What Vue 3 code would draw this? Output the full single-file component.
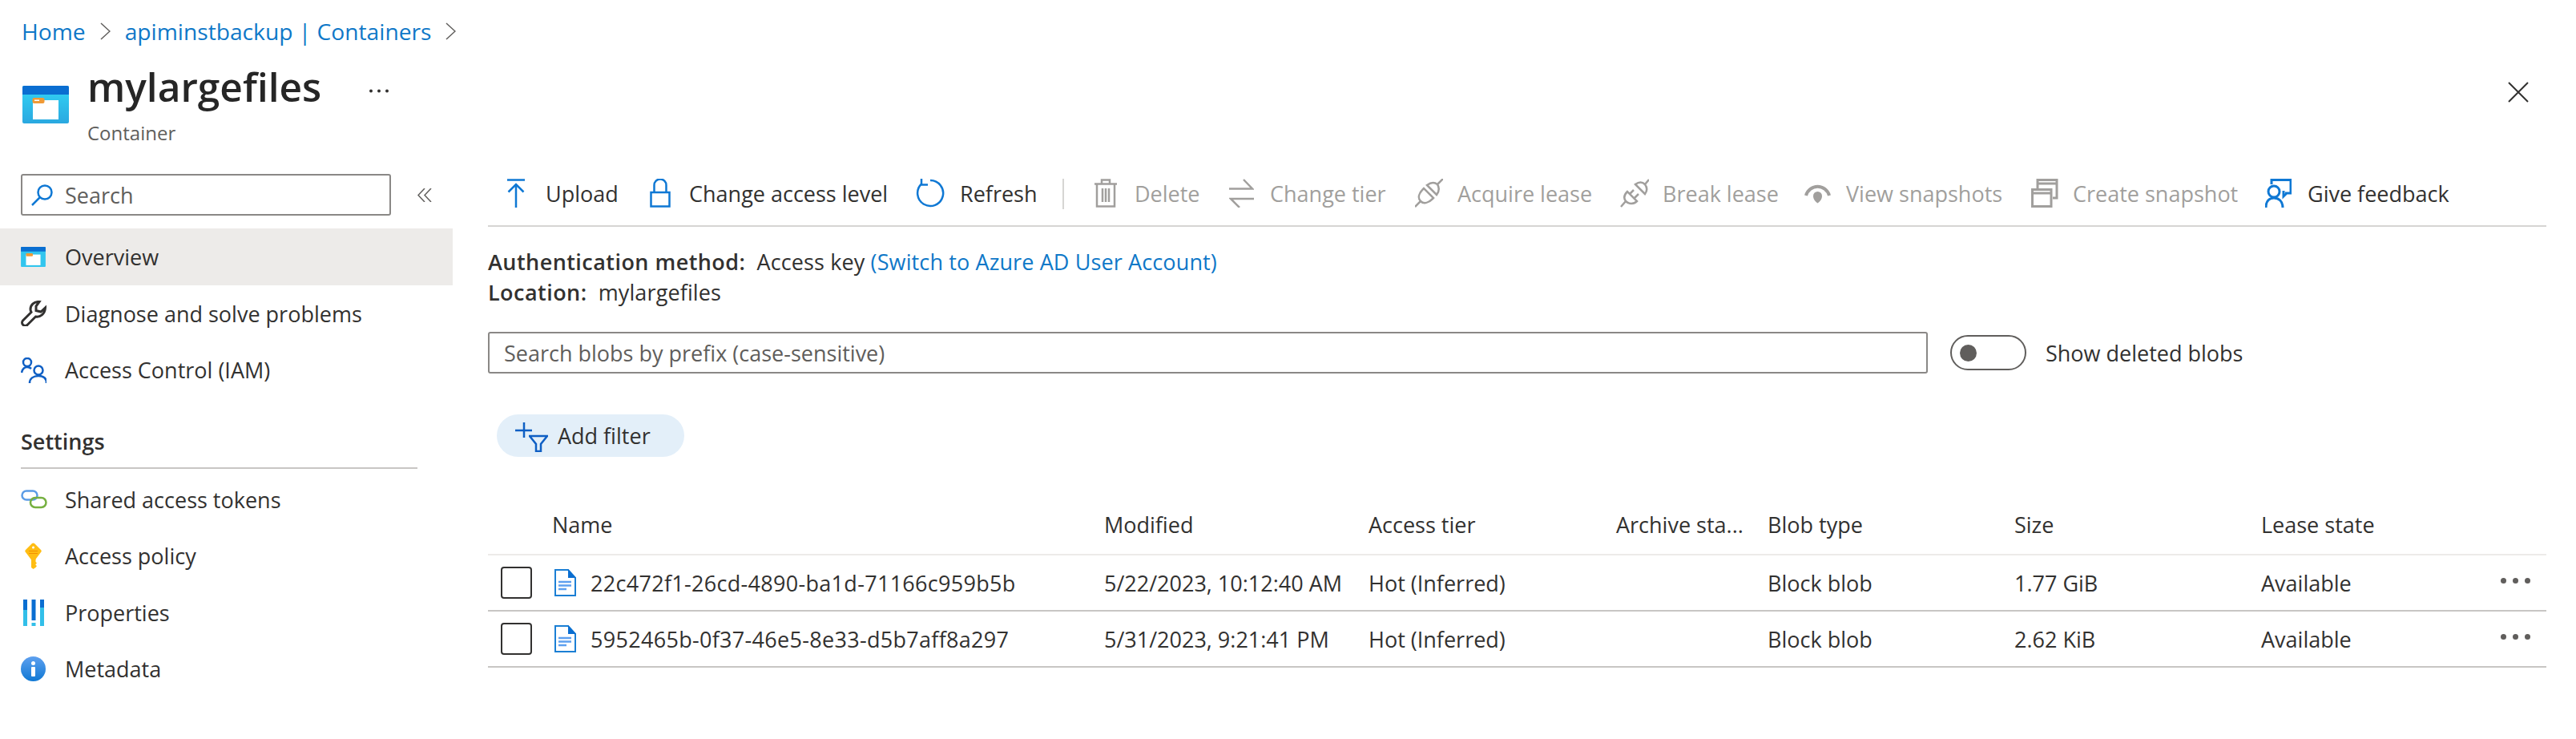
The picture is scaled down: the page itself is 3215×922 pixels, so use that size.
<script setup>
const tools = [
  { label: 'Upload', box: 48, w: 22, d: 'M0 1.5H22M11 36V7M1.5 16.5L11 7l9.5 9.5' },
  { label: 'Change access level', box: 49, w: 26, d: 'M1.5 17h23v17.5h-23zM5.5 17V8a7.5 7.5 0 0 1 15 0v9' },
  { label: 'Refresh', box: 55, w: 36, d: 'M18 2A16 16 0 1 1 7 6.5M7 0V7.5h8' },
  { sep: true },
  { label: 'Delete', box: 50, w: 28, off: true, d: 'M0 6.5H28M9 6V1.5h10V6M3 7V34.5h22V7M10 12V29M14 12V29M18 12V29' },
  { label: 'Change tier', box: 51, w: 31, off: true, d: 'M0 12.5H29L18 1M31 25H2L13 36' },
  { label: 'Acquire lease', box: 53, w: 35, off: true, d: 'M0 35L7 28M7 28C3 24 5 18 10 13L11 12L23 24L22 25C17 30 11 32 7 28ZM15 8L27 20C30 16 31 12 28 7C24 4 19 5 15 8ZM28 7L35 0' },
  { label: 'Break lease', box: 53, w: 36, off: true, d: 'M1 35L7 28C4 24 5 20 9 16L21 28C17 32 11 32 7 28M12 19L17 14M18 24L23 19M19 7L31 19C34 15 34 11 31 7C27 3 23 4 19 7ZM31 7L36 1' },
  { label: 'View snapshots', box: 52, w: 33, off: true, d: 'M2 21A15 15 0 0 1 31 21', fill: 'M16.5 16a5.5 5.5 0 0 1 5.5 5.5c0 4-3 7.5-5.5 9-2.500-1.500-5.500-5-5.500-9a5.500 5.500 0 0 1 5.500-5.500z', heavy: true },
  { label: 'Create snapshot', box: 52, w: 34, off: true, thick: true, d: 'M8 13V1.500H32V24H27M8 6H32M1.500 13.500H25V34.500H1.500ZM1.500 18H25' },
  { label: 'Give feedback', box: 53, w: 33, thick: true, d: 'M8 7V1.500H32V18H25M27 18L23 22V15M18 16a7 7 0 1 1-14 0a7 7 0 1 1 14 0M1 36C1 28 5 24 11 24S22 28 22 36' }
]

const columns = ['Name', 'Modified', 'Access tier', 'Archive sta...', 'Blob type', 'Size', 'Lease state']

const blobs = [
  { name: '22c472f1-26cd-4890-ba1d-71166c959b5b', modified: '5/22/2023, 10:12:40 AM', tier: 'Hot (Inferred)', type: 'Block blob', size: '1.77 GiB', lease: 'Available' },
  { name: '5952465b-0f37-46e5-8e33-d5b7aff8a297', modified: '5/31/2023, 9:21:41 PM', tier: 'Hot (Inferred)', type: 'Block blob', size: '2.62 KiB', lease: 'Available' }
]
</script>

<template>
  <div class="page">
    <nav class="crumbs">
      <a>Home</a>
      <svg class="chev" width="13" height="22" viewBox="0 0 13 22"><path d="M1 1l11 10L1 21" /></svg>
      <a>apiminstbackup | Containers</a>
      <svg class="chev" width="13" height="22" viewBox="0 0 13 22"><path d="M1 1l11 10L1 21" /></svg>
    </nav>

    <header class="head">
      <svg class="head-icon" width="58" height="47" viewBox="0 0 58 47">
        <defs>
          <linearGradient id="box" x1="0" y1="0" x2="0" y2="1">
            <stop offset="0" stop-color="#32d4f5" />
            <stop offset="1" stop-color="#2aa8e0" />
          </linearGradient>
        </defs>
        <rect width="58" height="47" rx="2" fill="url(#box)" />
        <path d="M0 11V2a2 2 0 0 1 2-2h54a2 2 0 0 1 2 2v9z" fill="#0a6ed1" />
        <rect x="13" y="18" width="32" height="24" fill="#fff" />
        <rect x="12.500" y="15" width="15" height="7" rx="2" fill="#f09a36" />
        <rect x="15" y="17.500" width="6" height="1.500" fill="#fff" />
      </svg>
      <div class="head-text">
        <h1>mylargefiles</h1>
        <div class="sub">Container</div>
      </div>
      <svg class="head-more" width="24" height="5" viewBox="0 0 24 5">
        <circle cx="2" cy="2.500" r="2" /><circle cx="12" cy="2.500" r="2" /><circle cx="22" cy="2.500" r="2" />
      </svg>
      <svg class="close" width="26" height="26" viewBox="0 0 26 26"><path d="M1 1l24 24M25 1L1 25" /></svg>
    </header>

    <div class="body">
      <aside class="side">
        <div class="side-search">
          <div class="search-box">
            <svg width="27" height="27" viewBox="0 0 27 27" class="line blue"><circle cx="17" cy="10" r="8.500" /><path d="M11 16L1 26" /></svg>
            <span>Search</span>
          </div>
          <svg class="collapse" width="18" height="17" viewBox="0 0 18 17"><path d="M9 0L1 8.500L9 17M17 0L9 8.500L17 17" /></svg>
        </div>

        <div class="item active">
          <span class="ico">
            <svg width="31" height="25" viewBox="0 0 58 47">
              <rect width="58" height="47" rx="2" fill="#32c5ee" />
              <path d="M0 11V2a2 2 0 0 1 2-2h54a2 2 0 0 1 2 2v9z" fill="#0a6ed1" />
              <rect x="12" y="18" width="34" height="25" fill="#fff" />
              <rect x="12" y="15" width="16" height="7" rx="2" fill="#f09a36" />
            </svg>
          </span>
          Overview
        </div>
        <div class="item">
          <span class="ico">
            <svg width="32" height="32" viewBox="0 0 32 32" class="line dark wrench"><path d="M23 1.500C16 1 12 6 12 11C12 12 12.500 13.500 13 14.500L2.500 25a3.900 3.900 0 0 0 5.500 5.500L18.500 20C24 21 30 17 30.500 9L25 14L19 12.500V7z" /></svg>
          </span>
          Diagnose and solve problems
        </div>
        <div class="item">
          <span class="ico">
            <svg width="32" height="32" viewBox="0 0 32 32" class="line people"><circle cx="8" cy="6" r="5" /><circle cx="22" cy="16" r="5.500" /><path d="M1 19c1-5 4-7 7-7 2 0 4 1 5 2M11 32c0-6 5-9 11-9s10 3 10 9" /></svg>
          </span>
          Access Control (IAM)
        </div>

        <div class="group">Settings</div>

        <div class="item">
          <span class="ico">
            <svg width="33" height="24" viewBox="0 0 33 24" fill="none" stroke-width="2.500">
              <rect x="1.500" y="1.500" width="19" height="11" rx="5.500" stroke="#5b9ce6" />
              <rect x="12" y="10" width="19.500" height="12" rx="6" stroke="#76b041" />
            </svg>
          </span>
          Shared access tokens
        </div>
        <div class="item">
          <span class="ico">
            <svg class="key" width="21" height="33" viewBox="0 0 21 33">
              <path d="M9 1Q10.500 0 12 1L20 9Q21.500 10.500 20 12L14 20Q13.500 21 13.500 22V24L15 25.500L13.500 27V28L15 29L13.500 31L10.500 33L8 31V22Q8 21 7 20L1 12Q-.5 10.500 1 9Z" fill="#ffbd13" />
              <circle cx="10.500" cy="6" r="1.500" fill="#fff" />
              <path d="M5 10.500h11M5 13.500h11" stroke="#f29000" stroke-width="1" />
            </svg>
          </span>
          Access policy
        </div>
        <div class="item">
          <span class="ico">
            <svg class="props" width="26" height="33" viewBox="0 0 26 33">
              <rect x="0" y="0" width="5" height="13" fill="#0a6ed1" />
              <rect x="0" y="13" width="5" height="20" fill="#32bfe9" />
              <rect x="10.500" y="0" width="5" height="26" fill="#0a6ed1" />
              <rect x="10.500" y="29" width="5" height="4" fill="#32bfe9" />
              <rect x="21" y="0" width="5" height="10" fill="#0a6ed1" />
              <rect x="21" y="10" width="5" height="23" fill="#32bfe9" />
            </svg>
          </span>
          Properties
        </div>
        <div class="item">
          <span class="ico">
            <svg width="31" height="31" viewBox="0 0 31 31">
              <defs>
                <linearGradient id="inf" x1="0" y1="0" x2="0" y2="1">
                  <stop offset="0" stop-color="#5ea0ef" />
                  <stop offset="1" stop-color="#0f78d4" />
                </linearGradient>
              </defs>
              <circle cx="15.500" cy="15.500" r="15.500" fill="url(#inf)" />
              <circle cx="15.500" cy="8.500" r="2.500" fill="#fff" />
              <rect x="13" y="13" width="5" height="12" rx="1" fill="#fff" />
            </svg>
          </span>
          Metadata
        </div>
      </aside>

      <main class="main">
        <div class="toolbar">
          <template v-for="t in tools" :key="t.label || 'sep'">
            <div v-if="t.sep" class="tool-sep"><i /></div>
            <div v-else class="tool" :class="{ off: t.off }">
              <span class="tool-ico" :style="{ width: t.box + 'px' }">
                <svg :class="{ heavy: t.heavy, thick: t.thick }" :width="t.w" height="36" :viewBox="`0 0 ${t.w} 36`">
                  <path :d="t.d" />
                  <path v-if="t.fill" :d="t.fill" class="solid" />
                </svg>
              </span>
              {{ t.label }}
            </div>
          </template>
        </div>

        <div class="info">
          <div><b>Authentication method:</b> Access key <a>(Switch to Azure AD User Account)</a></div>
          <div><b>Location:</b> mylargefiles</div>
        </div>

        <div class="prefix-row">
          <div class="prefix">Search blobs by prefix (case-sensitive)</div>
          <div class="toggle"><i /></div>
          <span>Show deleted blobs</span>
        </div>

        <div class="pill">
          <svg width="41" height="37" viewBox="0 0 41 37" class="line people">
            <path d="M11 0V19M0 10H21M17 17H40L32 27V36H26V27L18 17" />
          </svg>
          Add filter
        </div>

        <div class="table">
          <div class="tr th">
            <div />
            <div v-for="c in columns" :key="c">{{ c }}</div>
            <div />
          </div>
          <div v-for="b in blobs" :key="b.name" class="tr row">
            <div><span class="check" /></div>
            <div class="name">
              <svg width="27" height="34" viewBox="0 0 27 34">
                <path d="M1 1H17L26 11V33H1Z" fill="#fff" stroke="#1b7fd4" stroke-width="2" />
                <path d="M17 0L27 11H17Z" fill="#0a6ed1" />
                <path d="M5 16H21M5 20.500H21M5 25H15" stroke="#5ea0ef" stroke-width="2.500" />
              </svg>
              {{ b.name }}
            </div>
            <div>{{ b.modified }}</div>
            <div>{{ b.tier }}</div>
            <div />
            <div>{{ b.type }}</div>
            <div>{{ b.size }}</div>
            <div>{{ b.lease }}</div>
            <div class="dots"><i /><i /><i /></div>
          </div>
        </div>
      </main>
    </div>
  </div>
</template>

<style>
html, body { margin: 0; background: #fff; }
</style>

<style scoped>
.page {
  width: 3215px;
  height: 922px;
  overflow: hidden;
  font-family: "Open Sans", "Noto Sans", sans-serif;
  font-size: 27px;
  color: #323130;
}

a { color: #0f78c8; }

.crumbs {
  height: 78px;
  padding-left: 27px;
  display: flex;
  align-items: center;
  gap: 18px;
  box-sizing: border-box;
  font-size: 28.200px;
}
.chev path { fill: none; stroke: #605e5c; stroke-width: 1.500; }

.head { height: 139px; display: flex; position: relative; }
.head-icon { margin: 29px 0 0 28px; }
.head-text { margin-left: 23px; }
h1 { margin: -5px 0 0; font-size: 49.600px; font-weight: 600; line-height: 70px; color: #262626; }
.sub { font-size: 24px; color: #605e5c; line-height: 32px; margin-top: 7px; }
.head-more { margin: 33px 0 0 60px; fill: #323130; }
.close { margin: 24px 59px 0 auto; }
.close path { fill: none; stroke: #323130; stroke-width: 2; }

.body { display: flex; }
.side { width: 565px; flex: none; }
.side-search { display: flex; align-items: center; margin: 0 0 16px 26px; }
.search-box {
  width: 462px;
  height: 52px;
  box-sizing: border-box;
  border: 2px solid #8a8886;
  border-radius: 3px;
  display: flex;
  align-items: center;
  padding-left: 11px;
  gap: 15px;
  color: #605e5c;
}
.collapse { margin-left: 33px; }
.collapse path { fill: none; stroke: #605e5c; stroke-width: 1.500; }

.line { fill: none; stroke-width: 2.500; }
.blue { stroke: #0f78d4; }
.dark { stroke: #323130; }
.wrench { stroke-width: 3; }
.people { stroke: #0f5fc4; }

.item { height: 70.500px; display: flex; align-items: center; padding-top: 1px; box-sizing: border-box; }
.item.active { background: #edebe9; }
.ico { width: 81px; flex: none; display: flex; padding-left: 26px; box-sizing: border-box; }
.key { margin-left: 5px; }
.props { margin-left: 3px; }
.group {
  margin: 34px 44px 3px 26px;
  height: 52px;
  font-weight: 600;
  border-bottom: 2px solid #c8c6c4;
  line-height: 40px;
}

.main { width: 2569px; margin-left: 44px; }
.toolbar {
  height: 66px;
  box-sizing: border-box;
  border-bottom: 2px solid #d6d5d3;
  padding: 6px 0 0 24px;
  display: grid;
  grid-template-columns: 178px 332px 183px 40px 168px 232px 256px 230px 283px 292px auto;
  align-items: start;
}
.tool { display: flex; align-items: center; height: 36px; white-space: nowrap; }
.tool.off { color: #a19f9d; }
.tool-ico { display: flex; flex: none; }
.tool-ico path { fill: none; stroke: #0f78d4; stroke-width: 2.500; }
.tool.off .tool-ico path { stroke: #a19f9d; }
.tool-ico .heavy path { stroke-width: 4; }
.tool-ico .thick path { stroke-width: 3; }
.tool-ico .solid { fill: #a19f9d; stroke: none !important; }
.tool-sep { height: 38px; }
.tool-sep i { display: block; width: 2px; height: 38px; background: #d6d5d3; }

.info { margin-top: 25px; line-height: 38px; letter-spacing: .12px; }
.info b { font-weight: 600; margin-right: 7px; letter-spacing: .45px; }

.prefix-row { margin-top: 30px; display: flex; align-items: center; }
.prefix {
  width: 1797px;
  height: 52px;
  box-sizing: border-box;
  border: 2px solid #8a8886;
  border-radius: 3px;
  padding-left: 18px;
  display: flex;
  align-items: center;
  color: #605e5c;
}
.toggle {
  width: 95px;
  height: 44px;
  box-sizing: border-box;
  border: 2px solid #605e5c;
  border-radius: 22px;
  margin: 0 24px 0 28px;
  display: flex;
  align-items: center;
  padding-left: 10px;
}
.toggle i { width: 21px; height: 21px; border-radius: 50%; background: #605e5c; }

.pill {
  margin: 51px 0 0 11px;
  width: 234px;
  height: 53px;
  border-radius: 27px;
  background: #e3eff9;
  display: flex;
  align-items: center;
  gap: 12px;
  padding-left: 23px;
  box-sizing: border-box;
}
.pill svg { margin-top: 4px; }

.table { margin-top: 48px; }
.tr {
  display: grid;
  grid-template-columns: 80px 689px 330px 309px 189px 308px 308px 299px 57px;
  align-items: center;
  white-space: nowrap;
}
.th { height: 75px; border-bottom: 2px solid #edebe9; box-sizing: border-box; font-weight: 500; }
.row { height: 70px; border-bottom: 2px solid #c8c6c4; box-sizing: border-box; }
.row > div { display: flex; align-items: center; }
.check {
  display: block;
  margin-left: 16px;
  width: 39px;
  height: 40px;
  box-sizing: border-box;
  border: 2px solid #323130;
  border-radius: 4px;
}
.name { padding-left: 3px; gap: 18px; letter-spacing: .3px; }
.dots { gap: 8px; margin-top: -6px; }
.dots i { width: 7px; height: 7px; border-radius: 50%; background: #605e5c; }
</style>
